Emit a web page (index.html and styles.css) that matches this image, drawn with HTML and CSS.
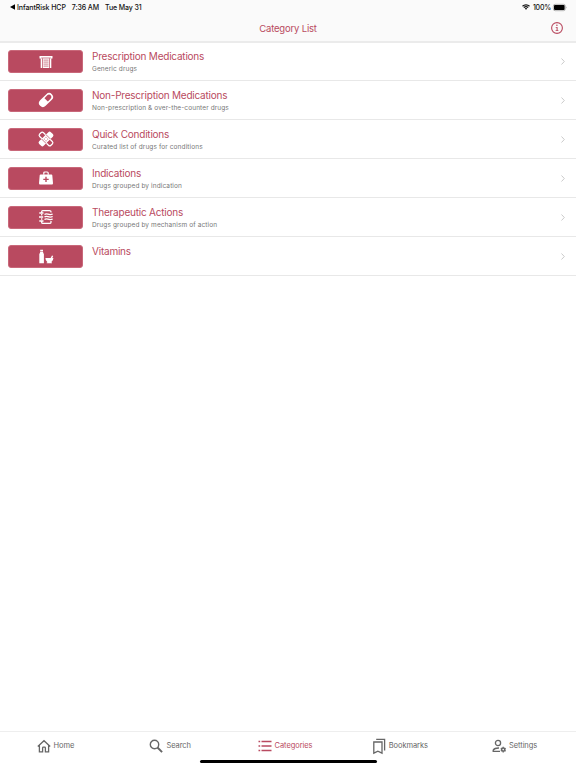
FILE: index.html
```html
<!DOCTYPE html>
<html lang="en">
<head>
    <meta charset="UTF-8">
    <meta name="viewport" content="width=device-width, initial-scale=1.0">
    <title>Category List</title>
    <link rel="stylesheet" href="styles.css">
</head>
<body>
    <header>
        <div class="status-bar">
            <svg class="back" viewBox="0 0 5 6"><path d="M5 .2v5.600L0 3z"/></svg>
            <span class="app">InfantRisk HCP</span>
            <span class="time">7:36 AM</span>
            <span class="date">Tue May 31</span>
            <svg class="wifi" viewBox="0 0 16 12"><path d="M1 4.500a10 10 0 0 1 14 0M3.700 7.200a6.200 6.200 0 0 1 8.600 0" fill="none" stroke="#111" stroke-width="2.500"/><path d="M5.500 9a3.700 3.700 0 0 1 5 0L8 11.700z"/></svg>
            <span class="charge">100%</span>
            <svg class="battery" viewBox="0 0 14 7"><rect x=".3" y=".3" width="12" height="6.400" rx="1.800" fill="none" stroke="#888" stroke-width=".6"/><rect x="1" y="1" width="10.600" height="5" rx="1"/><path d="M13 2.400q.9 1.100 0 2.200z" fill="#777"/></svg>
        </div>
        <div class="nav-bar">
            <h1>Category List</h1>
            <svg class="info" viewBox="0 0 12 12"><circle cx="6" cy="6" r="5.400" fill="none" stroke="currentColor" stroke-width="1.100"/><circle cx="5.900" cy="3.300" r=".8"/><path d="M4.700 4.900h1.900v3.300h.8V9H4.600v-.8h1V5.700h-.9z"/></svg>
        </div>
    </header>

    <main>
        <a class="row">
            <div class="tile">
                <svg viewBox="0 0 14 14"><path d="M.5 1h13v2.500h-1.200V13H1.700V3.500H.5z"/><path d="M2.200 3h9.600M4.500 5.100h5M4.500 7.100h5M4.500 9.100h5M4.500 11.100h5M3.500 3.300V13M10.500 3.300V13" class="cut"/></svg>
            </div>
            <div class="label"><h2>Prescription Medications</h2><p>Generic drugs</p></div>
            <svg class="chevron" viewBox="0 0 4 7"><path d="M.5.5l2.800 3-2.800 3"/></svg>
        </a>
        <a class="row">
            <div class="tile">
                <svg viewBox="0 0 14 14"><g transform="rotate(-45 7 7)"><rect x="-1.300" y="3.100" width="16.600" height="7.800" rx="3.900"/><path d="M7.200 4.600h4a2.400 2.400 0 0 1 0 4.800h-4z" fill="#b94a60"/></g></svg>
            </div>
            <div class="label"><h2>Non-Prescription Medications</h2><p>Non-prescription &amp; over-the-counter drugs</p></div>
            <svg class="chevron" viewBox="0 0 4 7"><path d="M.5.5l2.800 3-2.800 3"/></svg>
        </a>
        <a class="row">
            <div class="tile">
                <svg viewBox="0 0 14 14"><g transform="rotate(45 7 7)"><rect x="-1" y="4.300" width="16" height="5.400" rx="1.800" fill="none" stroke="#fff" stroke-width="1.200"/><rect x="3.800" y="-1.300" width="6.400" height="16.600" rx="1.800"/><path d="M3.600 3.900h6.800M3.600 10.100h6.800" class="cut"/></g><g fill="#b94a60"><circle cx="7" cy="5.300" r=".55"/><circle cx="5.300" cy="7" r=".55"/><circle cx="8.700" cy="7" r=".55"/><circle cx="7" cy="8.700" r=".55"/></g></svg>
            </div>
            <div class="label"><h2>Quick Conditions</h2><p>Curated list of drugs for conditions</p></div>
            <svg class="chevron" viewBox="0 0 4 7"><path d="M.5.5l2.800 3-2.800 3"/></svg>
        </a>
        <a class="row">
            <div class="tile">
                <svg viewBox="0 0 14 14"><path d="M4.800 3.700V2Q4.800 1 5.800 1h2.400Q9.200 1 9.200 2v1.700" fill="none" stroke="#fff" stroke-width="1.200"/><path d="M1.600 3.500h10.800q.8 0 .9.8L14 12.300q0 1.200-1 1.200H1Q0 13.500 0 12.300l.7-8q.1-.8.9-.8z"/><path d="M7 5.700v5.400M4.300 8.400h5.400" stroke="#b94a60" stroke-width="1.400"/></svg>
            </div>
            <div class="label"><h2>Indications</h2><p>Drugs grouped by indication</p></div>
            <svg class="chevron" viewBox="0 0 4 7"><path d="M.5.5l2.800 3-2.800 3"/></svg>
        </a>
        <a class="row">
            <div class="tile">
                <svg viewBox="0 0 14 14" class="line"><path d="M2.700 2.200V1.600Q2.700.6 3.700.6h6.800Q12 .6 12 1.800v.7M2.700 11.800v.6q0 1 1 1h6.800q1.500 0 1.500-1.200V11M2.700 4v1.600M2.700 8.200v1.600M.3 3h4.200M0 7h4.200M.3 11h4.200"/><path d="M5.500 4.500c2.600-2 4 1.400 8.200-.5M5.500 7c2.600-2 4 1.400 8.200-.5M5.500 9.500c2.600-2 4 1.400 8.200-.5"/></svg>
            </div>
            <div class="label"><h2>Therapeutic Actions</h2><p>Drugs grouped by mechanism of action</p></div>
            <svg class="chevron" viewBox="0 0 4 7"><path d="M.5.5l2.800 3-2.800 3"/></svg>
        </a>
        <a class="row">
            <div class="tile">
                <svg viewBox="0 0 14 14"><path d="M1.200.8h2.800v1.400H1.200zM1.200 2.700h2.800q.1 1.300.9 2.300v9.300H.3V5q.8-1 .9-2.300zM6.400 9h5.200l1.400-2.600 1.200.5L13.300 9h1.100q0 2.600-2 3.900v.6h.6v.8H7.700v-.8h.6v-.6Q6.400 11.600 6.400 9z"/></svg>
            </div>
            <div class="label"><h2>Vitamins</h2></div>
            <svg class="chevron" viewBox="0 0 4 7"><path d="M.5.5l2.800 3-2.800 3"/></svg>
        </a>
    </main>

    <footer>
        <nav>
            <a>
                <svg viewBox="0 0 14 14"><path d="M.8 7.500L7 1.700l6.200 5.800M2.400 6.500v6.300h3.200V9q0-.8.8-.8h1.200q.8 0 .8.8v3.800h3.200V6.500"/></svg>
                <span>Home</span>
            </a>
            <a>
                <svg viewBox="0 0 14 14"><circle cx="5.500" cy="5.500" r="4.200" stroke-width="1.400"/><path d="M8.500 8.500l4.600 4.600" stroke-width="1.900"/></svg>
                <span>Search</span>
            </a>
            <a class="active">
                <svg viewBox="0 0 14 14"><path d="M3.500 2.500h10M3.500 7h10M3.500 11.500h10M.5 2.500h1.700M.5 7h1.700M.5 11.500h1.700" stroke-width="1.500"/></svg>
                <span>Categories</span>
            </a>
            <a>
                <svg viewBox="0 0 14 14"><path d="M1.800 3h8.200v11.200l-4.100-2-4.100 2zM4.200.4h8.400v11.200"/></svg>
                <span>Bookmarks</span>
            </a>
            <a>
                <svg viewBox="0 0 14 14"><circle cx="6" cy="4" r="2.600"/><path d="M8 12.300H1.200v-1.200Q2.700 8.900 7 9"/><circle cx="11.200" cy="10.600" r="1.600" stroke-width="1.600"/><path d="M11.200 7.700v1M11.200 12.500v1M8.800 9.200l.8.500M12.800 11.600l.8.500M8.800 12l.8-.5M12.800 9.700l.8-.5"/></svg>
                <span>Settings</span>
            </a>
        </nav>
        <div class="home-indicator"></div>
    </footer>
</body>
</html>
```
FILE: styles.css
```css
* {
    box-sizing: border-box;
}

body {
    margin: 0;
    height: 100vh;
    display: flex;
    flex-direction: column;
    background: white;
    color: #111;
    font-family: Inter, "Liberation Sans", sans-serif;
}

h1, h2, p {
    margin: 0;
    font-weight: 400;
    white-space: nowrap;
}

svg {
    display: block;
    flex: none;
    overflow: visible;
}

header {
    height: 43px;
    background: #fafafa;
    border-bottom: 2px solid #ebebeb;
}

.status-bar {
    height: 14px;
    padding: 0 9px 0 10px;
    display: flex;
    align-items: center;
    font-size: 7px;
    font-weight: 500;
    white-space: nowrap;
}

.back {
    width: 5px;
    height: 6px;
    margin-right: 2px;
}

.app {
    letter-spacing: -0.08px;
}

.time {
    margin-left: 6px;
    letter-spacing: -0.1px;
}

.date {
    margin-left: 6px;
    letter-spacing: -0.12px;
}

.wifi {
    width: 8px;
    height: 6px;
    margin-left: auto;
}

.charge {
    margin: 0 2px 0 3px;
    letter-spacing: -0.2px;
}

.battery {
    width: 14px;
    height: 7px;
}

.nav-bar {
    height: 28px;
    padding: 0 13px;
    display: grid;
    grid-template-columns: 12px 1fr 12px;
    align-items: center;
    color: #b94a60;
}

.nav-bar h1 {
    grid-column: 2;
    font-size: 9.5px;
    letter-spacing: -0.18px;
    text-align: center;
}

.info {
    width: 12px;
    height: 12px;
    fill: currentColor;
}

.row {
    height: 39px;
    padding: 0 11px 0 8px;
    display: flex;
    align-items: center;
    border-bottom: 1px solid #e8e8e8;
}

.row:first-child {
    height: 38px;
}

.tile {
    width: 75px;
    height: 23px;
    display: flex;
    align-items: center;
    justify-content: center;
    background: #b94a60;
    border: 1px solid #c9687a;
    border-radius: 3px;
}

.tile svg {
    width: 14px;
    height: 14px;
    fill: white;
}

.tile .cut {
    fill: none;
    stroke: #b94a60;
    stroke-width: 0.7;
}

.tile .line {
    fill: none;
    stroke: white;
    stroke-width: 1.3;
}

.label {
    flex: 1;
    height: 30px;
    padding-top: 3px;
    margin-left: 9px;
}

.row:first-child .label {
    padding-top: 2px;
}

.label h2 {
    font-size: 10px;
    line-height: 14px;
    letter-spacing: -0.22px;
    color: #b94a60;
}

.label p {
    margin-top: 1px;
    font-size: 6.5px;
    line-height: 10px;
    letter-spacing: 0.11px;
    color: #777;
}

.chevron {
    width: 4px;
    height: 7px;
    fill: none;
    stroke: #c4c4c4;
    stroke-width: 0.9;
}

footer {
    height: 37px;
    margin-top: auto;
    border-top: 1px solid #eee;
}

nav {
    height: 27px;
    display: grid;
    grid-template-columns: repeat(5, 1fr);
    padding-right: 2px;
}

nav a {
    display: flex;
    align-items: center;
    justify-content: center;
    gap: 3px;
    padding-right: 4px;
    font-size: 7.5px;
    letter-spacing: -0.08px;
    color: #666;
}

nav svg {
    width: 14px;
    height: 14px;
    fill: none;
    stroke: currentColor;
    stroke-width: 1.3;
}

nav .active {
    color: #b94a60;
}

.home-indicator {
    width: 177px;
    height: 3px;
    margin: 1px auto 0;
    border-radius: 2px;
    background: black;
}
```
